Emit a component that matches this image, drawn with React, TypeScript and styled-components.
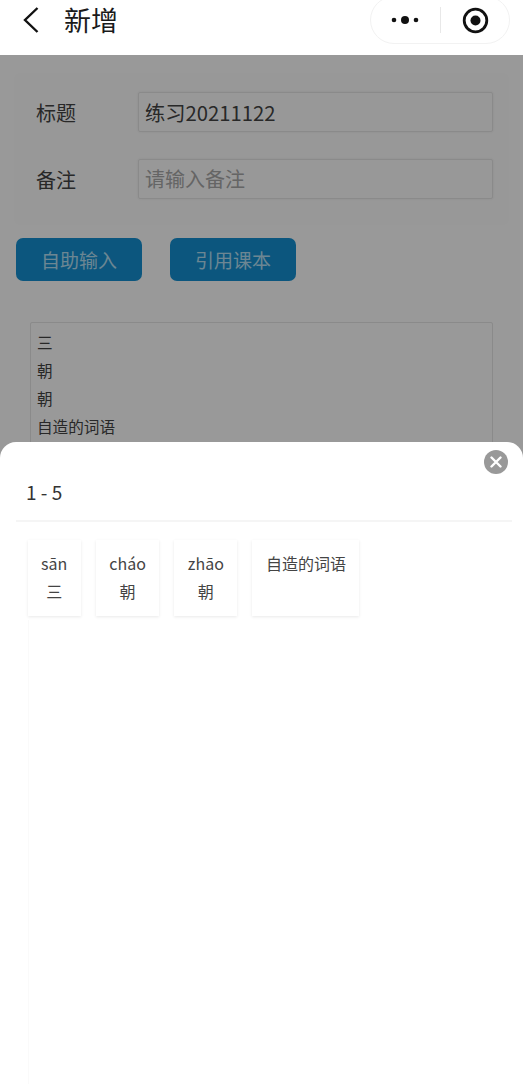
import React from "react";
import styled, { createGlobalStyle } from "styled-components";

const words = [
  { pinyin: "sān", text: "三" },
  { pinyin: "cháo", text: "朝" },
  { pinyin: "zhāo", text: "朝" },
  { pinyin: "", text: "自造的词语" },
];

const App = () => {
  return (
    <Page>
      <GlobalStyle />
      <NavBar>
        <BackIcon width="20" height="28" viewBox="0 0 20 28">
          <path d="M15.5 2 L3 14 L15.5 26" />
        </BackIcon>
        <NavTitle>新增</NavTitle>
        <Capsule>
          <svg width="30" height="10" viewBox="0 0 30 10">
            <circle cx="3" cy="5" r="2.3" fill="#111" />
            <circle cx="14" cy="5" r="4" fill="#111" />
            <circle cx="25" cy="5" r="2.3" fill="#111" />
          </svg>
          <CapsuleLine />
          <svg width="27" height="27" viewBox="0 0 27 27">
            <circle cx="13.5" cy="13.5" r="11.3" fill="none" stroke="#111" strokeWidth="2.8" />
            <circle cx="13.5" cy="13.5" r="5" fill="#111" />
          </svg>
        </Capsule>
      </NavBar>

      <FormCard>
        <FormRow>
          <FormLabel>标题</FormLabel>
          <FormInput>练习20211122</FormInput>
        </FormRow>
        <FormRow>
          <FormLabel>备注</FormLabel>
          <FormInput $empty>请输入备注</FormInput>
        </FormRow>
      </FormCard>

      <ButtonRow>
        <BlueButton>自助输入</BlueButton>
        <BlueButton>引用课本</BlueButton>
      </ButtonRow>

      <WordBox>
        <div>三</div>
        <div>朝</div>
        <div>朝</div>
        <div>自造的词语</div>
      </WordBox>

      <Mask />

      <Sheet>
        <CloseButton>
          <svg width="12" height="12" viewBox="0 0 12 12">
            <path d="M1.5 1.5 L10.5 10.5 M10.5 1.5 L1.5 10.5" stroke="#fff" strokeWidth="2.4" strokeLinecap="round" />
          </svg>
        </CloseButton>
        <SheetTitle>1 - 5</SheetTitle>
        <WordList>
          {words.map((w, i) => (
            <WordCard key={i}>
              <WordLine>{w.pinyin || w.text}</WordLine>
              <WordLine>{w.pinyin ? w.text : ""}</WordLine>
            </WordCard>
          ))}
        </WordList>
        <ListEdge />
      </Sheet>
    </Page>
  );
};

export default App;

const GlobalStyle = createGlobalStyle`
  html, body {
    margin: 0;
    padding: 0;
    height: 100%;
    overflow: hidden;
    background: #fff;
  }
  * {
    box-sizing: border-box;
  }
`;

const Page = styled.div`
  position: relative;
  width: 523px;
  height: 1084px;
  overflow: hidden;
  font-family: "Noto Sans CJK SC", "Noto Sans", sans-serif;
  color: #333;
  background: #fff;
`;

const NavBar = styled.div`
  position: relative;
  z-index: 2;
  display: flex;
  align-items: center;
  height: 55px;
  padding: 0 13px 15px 22px;
  background: #fff;
`;

const BackIcon = styled.svg`
  flex: none;
  fill: none;
  stroke: #111;
  stroke-width: 2.4;
`;

const NavTitle = styled.div`
  flex: 1;
  margin-left: 22px;
  font-size: 27px;
  line-height: 40px;
  color: #1a1a1a;
`;

const Capsule = styled.div`
  display: flex;
  flex: none;
  align-items: center;
  justify-content: space-between;
  width: 140px;
  height: 48px;
  padding: 0 20px;
  border: 1px solid #f2f2f2;
  border-radius: 24px;
  background: #fff;
`;

const CapsuleLine = styled.div`
  width: 1px;
  height: 26px;
  margin-left: -2px;
  background: #e8e8e8;
`;

const FormCard = styled.div`
  display: flex;
  flex-direction: column;
  gap: 27px;
  margin: 20px 16px 0;
  padding: 17px 14px 24px 20px;
  background: #fefefe;
  box-shadow: 0 0 4px rgba(0, 0, 0, 0.02);
`;

const FormRow = styled.div`
  display: flex;
  align-items: center;
`;

const FormLabel = styled.div`
  flex: none;
  width: 102px;
  font-size: 20px;
  color: #444;
`;

const FormInput = styled.div<{ $empty?: boolean }>`
  flex: 1;
  height: 40px;
  padding: 0 6px;
  font-size: ${(props) => (props.$empty ? "20px" : "20.3px")};
  line-height: 38px;
  border: 1px solid #e6e6e6;
  border-radius: 2px;
  box-shadow: 0 0 3px rgba(0, 0, 0, 0.08);
  color: ${(props) => (props.$empty ? "#a8a8a8" : "#444")};
`;

const ButtonRow = styled.div`
  display: flex;
  gap: 28px;
  margin: 15px 16px 0;
`;

const BlueButton = styled.div`
  width: 126px;
  height: 43px;
  font-size: 19px;
  line-height: 44px;
  text-align: center;
  color: #b5e0f5;
  border-radius: 7px;
  background: #1490d2;
`;

const WordBox = styled.div`
  height: 200px;
  margin: 41px 30px 0;
  padding: 5px 6px 0;
  font-size: 15.6px;
  line-height: 28px;
  color: #444;
  border: 1px solid #e6e6e6;
  border-radius: 2px;
`;

const Mask = styled.div`
  position: absolute;
  inset: 0;
  z-index: 1;
  background: rgba(0, 0, 0, 0.4);
`;

const Sheet = styled.div`
  position: absolute;
  left: 0;
  right: 0;
  bottom: 0;
  z-index: 3;
  display: flex;
  flex-direction: column;
  height: 642px;
  padding: 0 11px 0 16px;
  border-radius: 16px 16px 0 0;
  background: #fff;
`;

const CloseButton = styled.div`
  position: absolute;
  top: 8px;
  right: 15px;
  display: flex;
  align-items: center;
  justify-content: center;
  width: 24px;
  height: 24px;
  border-radius: 50%;
  background: #999;
`;

const SheetTitle = styled.div`
  flex: none;
  height: 80px;
  padding: 36px 0 0 10px;
  font-size: 19px;
  line-height: 28px;
  color: #333;
  border-bottom: 2px solid #f5f5f5;
`;

const WordList = styled.div`
  display: flex;
  flex: none;
  gap: 15px;
  margin: 18px 0 0 11.5px;
`;

const WordCard = styled.div`
  height: 76px;
  padding: 10px 13.5px 9px;
  text-align: center;
  box-shadow: 0 1px 3px rgba(0, 0, 0, 0.09);
`;

const WordLine = styled.div`
  font-size: 16px;
  line-height: 27.5px;
  color: #444;
`;

const ListEdge = styled.div`
  flex: 1;
  margin: 4px 0 0 12px;
  border-left: 1px solid #fafafa;
`;
